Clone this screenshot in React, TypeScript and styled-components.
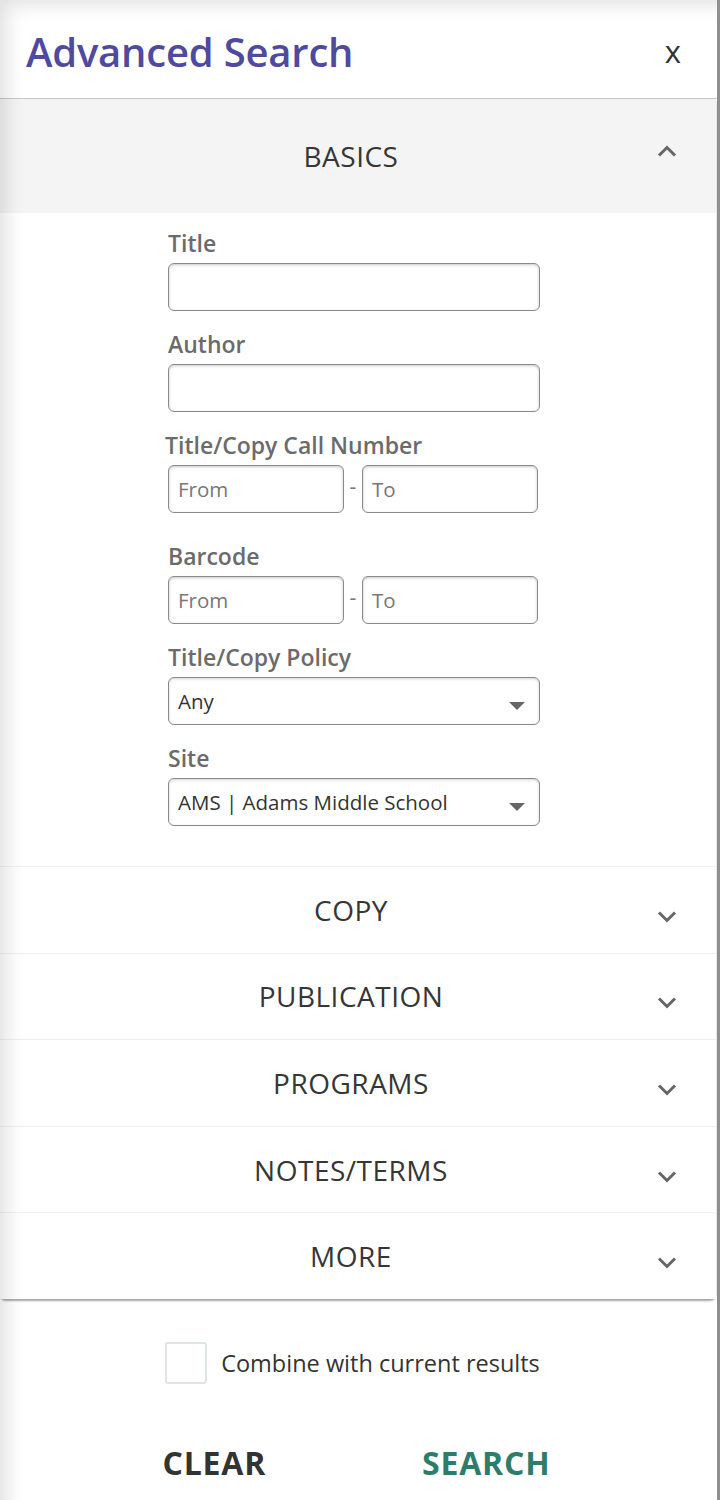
import React from "react";
import styled, { createGlobalStyle } from "styled-components";

const Global = createGlobalStyle`
  html, body { margin: 0; padding: 0; background: #fff; }
  body { font-family: "Open Sans", "Liberation Sans", sans-serif; }
  * { box-sizing: border-box; }
`;

const Root = styled.div`
  position: relative;
  width: 720px;
  min-height: 1500px;
  background: #fff;
  border-right: 3px solid #8f8f8f;
  overflow: hidden;
`;

const Shade = styled.div`
  position: absolute;
  inset: 0;
  pointer-events: none;
  box-shadow: inset 16px 14px 20px -10px rgba(0, 0, 0, 0.13);
  z-index: 5;
`;

const Header = styled.header`
  height: 99px;
  display: flex;
  align-items: center;
  justify-content: space-between;
  padding: 4px 36px 0 26px;
  border-bottom: 1px solid #c9c9c9;
`;

const Title = styled.h1`
  margin: 0;
  font-size: 40px;
  font-weight: 600;
  color: #4f4a9d;
  letter-spacing: -0.2px;
`;

const Close = styled.button`
  border: 0;
  background: none;
  padding: 0;
  font-family: inherit;
  font-size: 31px;
  font-weight: 500;
  color: #333;
  line-height: 1;
`;

const Card = styled.div`
  margin-right: 1px;
  border-radius: 0 0 6px 6px;
  box-shadow: 0 2px 2px rgba(0, 0, 0, 0.35);
  background: #fff;
`;

const SectionHead = styled.div<{ $open?: boolean }>`
  display: grid;
  grid-template-columns: 1fr auto 1fr;
  align-items: center;
  height: ${(p) => (p.$open ? "114px" : "86.6px")};
  padding-right: 14px;
  background: ${(p) => (p.$open ? "#f4f4f4" : "#fff")};
  border-top: ${(p) => (p.$open ? "0" : "1px solid #efefef")};
`;

const SectionLabel = styled.span`
  grid-column: 2;
  font-size: 28px;
  color: #363636;
  letter-spacing: 0.5px;
`;

const ChevronBox = styled.span<{ $up?: boolean }>`
  grid-column: 3;
  justify-self: end;
  margin-right: 25px;
  display: flex;
  margin-top: ${(p) => (p.$up ? "-10px" : "14px")};
`;

const Body = styled.div`
  padding: 17px 0 40px 168px;
`;

const Fields = styled.div`
  width: 372px;
  display: flex;
  flex-direction: column;
`;

const Field = styled.div<{ $after?: number }>`
  display: flex;
  flex-direction: column;
  gap: 6px;
  margin-bottom: ${(p) => p.$after ?? 20}px;
`;

const Label = styled.label<{ $outdent?: boolean }>`
  font-size: 23px;
  line-height: 27px;
  font-weight: 600;
  color: #6b6b6b;
  margin-left: ${(p) => (p.$outdent ? "-3px" : "0")};
`;

const Input = styled.input`
  height: 48px;
  width: 100%;
  border: 1px solid #8a8a8a;
  border-radius: 6px;
  box-shadow: inset 0 1px 3px rgba(0, 0, 0, 0.22);
  padding: 0 9px;
  font-family: inherit;
  font-size: 20.5px;
  color: #333;
  &::placeholder { color: #777; }
`;

const Range = styled.div`
  display: grid;
  grid-template-columns: 176px 18px 176px;
  align-items: center;
`;

const Dash = styled.span`
  text-align: center;
  font-size: 21px;
  color: #777;
  margin-top: -6px;
`;

const Select = styled.div`
  height: 48px;
  border: 1px solid #8a8a8a;
  border-radius: 6px;
  box-shadow: inset 0 1px 3px rgba(0, 0, 0, 0.18);
  display: flex;
  align-items: center;
  justify-content: space-between;
  padding: 0 14px 0 9px;
  font-size: 20.5px;
  color: #333;
`;

const Caret = styled.span`
  width: 0;
  height: 0;
  border-left: 8px solid transparent;
  border-right: 8px solid transparent;
  border-top: 8px solid #666;
  margin-top: 10px;
`;

const Footer = styled.div`
  display: flex;
  flex-direction: column;
  align-items: center;
  padding-top: 43px;
`;

const CheckRow = styled.label`
  display: flex;
  align-items: center;
  gap: 14px;
  margin-right: 12px;
  font-size: 23.5px;
  color: #333;
`;

const Box = styled.span`
  width: 42px;
  height: 42px;
  border: 2px solid #e1e3ea;
  border-radius: 3px;
  background: #fff;
`;

const Buttons = styled.div`
  display: flex;
  gap: 156px;
  margin-top: 57px;
  margin-right: 4px;
`;

const Btn = styled.button<{ $primary?: boolean }>`
  border: 0;
  background: none;
  padding: 0;
  font-family: inherit;
  font-size: 32px;
  font-weight: 700;
  letter-spacing: 0.8px;
  color: ${(p) => (p.$primary ? "#2e7d6b" : "#333")};
`;

const Chevron = ({ up }: { up?: boolean }) => (
  <svg width="20" height="12" viewBox="0 0 20 12">
    <path
      d={up ? "M2 10.5 L10 2.5 L18 10.5" : "M2 1.5 L10 9.5 L18 1.5"}
      fill="none"
      stroke="#666"
      strokeWidth="3"
    />
  </svg>
);

const collapsed = ["COPY", "PUBLICATION", "PROGRAMS", "NOTES/TERMS", "MORE"];

export default function App() {
  return (
    <Root>
      <Global />
      <Shade />
      <Header>
        <Title>Advanced Search</Title>
        <Close>x</Close>
      </Header>
      <Card>
        <SectionHead $open>
          <SectionLabel>BASICS</SectionLabel>
          <ChevronBox $up>
            <Chevron up />
          </ChevronBox>
        </SectionHead>
        <Body>
          <Fields>
            <Field>
              <Label>Title</Label>
              <Input />
            </Field>
            <Field>
              <Label>Author</Label>
              <Input />
            </Field>
            <Field $after={30}>
              <Label $outdent>Title/Copy Call Number</Label>
              <Range>
                <Input placeholder="From" />
                <Dash>-</Dash>
                <Input placeholder="To" />
              </Range>
            </Field>
            <Field>
              <Label>Barcode</Label>
              <Range>
                <Input placeholder="From" />
                <Dash>-</Dash>
                <Input placeholder="To" />
              </Range>
            </Field>
            <Field>
              <Label>Title/Copy Policy</Label>
              <Select>
                <span>Any</span>
                <Caret />
              </Select>
            </Field>
            <Field $after={0}>
              <Label>Site</Label>
              <Select>
                <span>AMS | Adams Middle School</span>
                <Caret />
              </Select>
            </Field>
          </Fields>
        </Body>
        {collapsed.map((s) => (
          <SectionHead key={s}>
            <SectionLabel>{s}</SectionLabel>
            <ChevronBox>
              <Chevron />
            </ChevronBox>
          </SectionHead>
        ))}
      </Card>
      <Footer>
        <CheckRow>
          <Box />
          Combine with current results
        </CheckRow>
        <Buttons>
          <Btn>CLEAR</Btn>
          <Btn $primary>SEARCH</Btn>
        </Buttons>
      </Footer>
    </Root>
  );
}
